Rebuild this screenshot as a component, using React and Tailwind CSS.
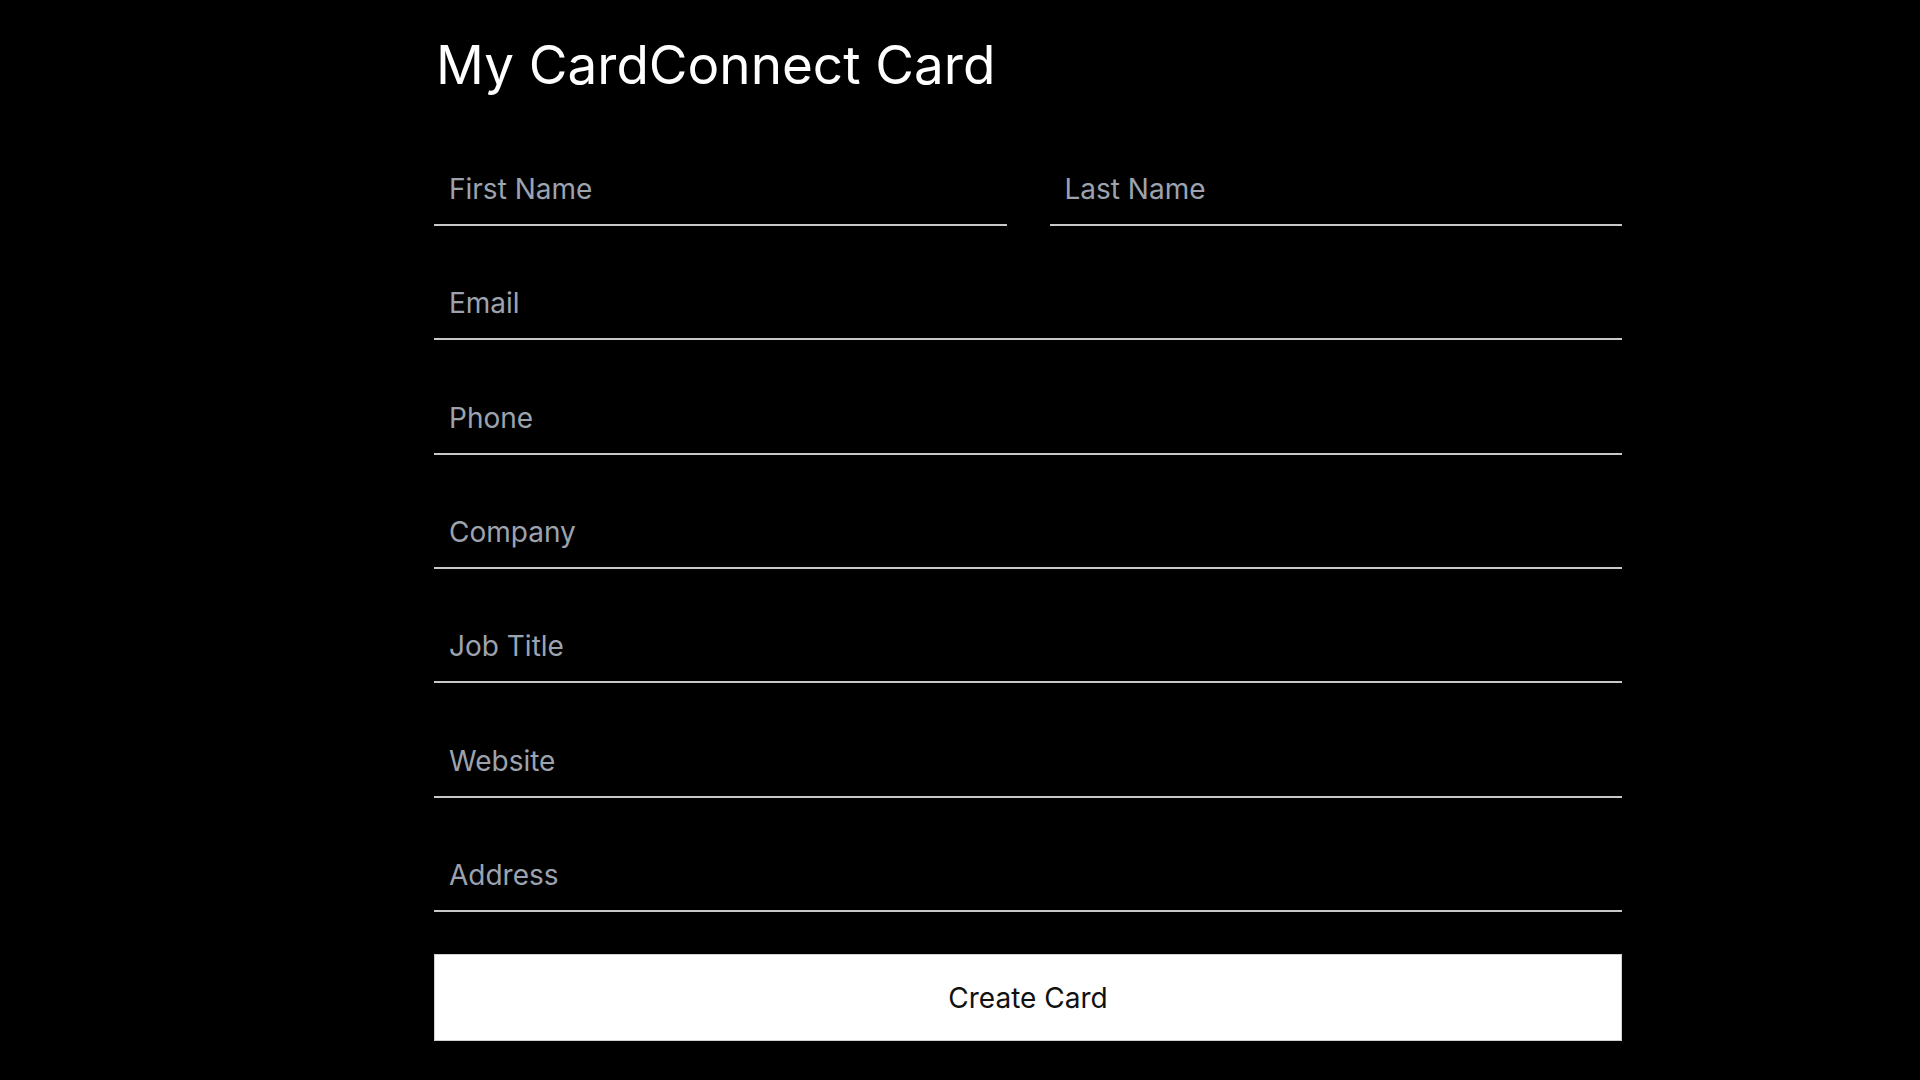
import { useState } from "react"

const fields = [
  { name: "email", placeholder: "Email", type: "email" },
  { name: "phone", placeholder: "Phone", type: "tel" },
  { name: "company", placeholder: "Company", type: "text" },
  { name: "jobTitle", placeholder: "Job Title", type: "text" },
  { name: "website", placeholder: "Website", type: "url" },
  { name: "address", placeholder: "Address", type: "text" },
]

const inputClass =
  "block w-full h-[72px] bg-transparent border-0 border-b-2 border-[#c8c8c8] px-[15px] text-[28px] leading-[34px] text-white placeholder:text-[#9ca3af] outline-none focus:border-white"

export default function App() {
  const [form, setForm] = useState({})

  const handleChange = (e) => {
    setForm({ ...form, [e.target.name]: e.target.value })
  }

  const handleSubmit = (e) => {
    e.preventDefault()
  }

  return (
    <div className="min-h-screen bg-black font-['Inter','Liberation_Sans',sans-serif]">
      <div className="ml-[434px] w-[1188px] pt-[39px]">
        <h1 className="pl-[2px] text-[53px] leading-none font-normal text-white">My CardConnect Card</h1>

        <form onSubmit={handleSubmit} className="mt-[62px] flex flex-col gap-[42.33px]">
          <div className="grid grid-cols-2 gap-[43px]">
            <input
              name="firstName"
              placeholder="First Name"
              value={form.firstName || ""}
              onChange={handleChange}
              className={inputClass}
            />
            <input
              name="lastName"
              placeholder="Last Name"
              value={form.lastName || ""}
              onChange={handleChange}
              className={inputClass}
            />
          </div>

          {fields.map((field) => (
            <input
              key={field.name}
              name={field.name}
              type={field.type}
              placeholder={field.placeholder}
              value={form[field.name] || ""}
              onChange={handleChange}
              className={inputClass}
            />
          ))}

          <button
            type="submit"
            className="h-[87px] w-full bg-white border border-[#d0d0d0] text-[28px] text-[#111111] hover:bg-gray-100"
          >
            Create Card
          </button>
        </form>
      </div>
    </div>
  )
}
